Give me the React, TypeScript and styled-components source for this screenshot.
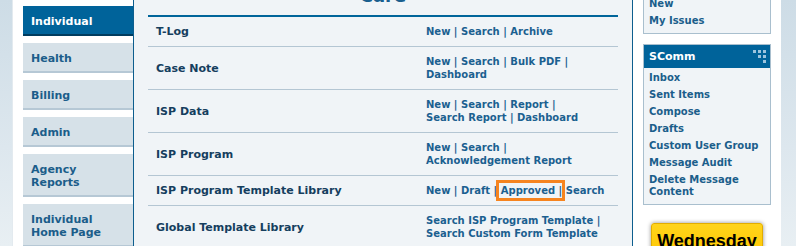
import React from "react";
import styled, { createGlobalStyle } from "styled-components";

const GlobalStyle = createGlobalStyle`
    html, body {
        margin: 0;
        height: 100%;
        overflow: hidden;
    }
    body {
        background: linear-gradient(180deg, #cddce6 0%, #dde7ee 60%, #e8eff3 100%);
        font-family: "DejaVu Sans", Verdana, sans-serif;
    }
`;

const Shell = styled.div`
    display: flex;
    align-items: flex-start;
    margin: 0 15px 0 12px;
    min-height: 100vh;
    padding: 0 10px;
    background: #ffffff;
    border-left: 1px solid #e3eaef;
`;

const Nav = styled.nav`
    width: 110px;
    flex-shrink: 0;
    padding-top: 6px;
    display: flex;
    flex-direction: column;
    gap: 7px;
`;

const NavTab = styled.a<{ $active?: boolean }>`
    display: block;
    padding: 9px 8px 6px;
    font-size: 11px;
    line-height: 13px;
    font-weight: bold;
    color: ${(p) => (p.$active ? "#ffffff" : "#1b5d8a")};
    background: ${(p) => (p.$active ? "#00639a" : "#d6e1e8")};
    border-bottom: 2px solid ${(p) => (p.$active ? "#003c5f" : "#b6c8d5")};
    text-decoration: none;
`;

const Main = styled.main`
    width: 500px;
    flex-shrink: 0;
    box-sizing: border-box;
    margin-top: -15px;
    padding: 0 14px;
    min-height: 300px;
    background: #f0f4f7;
    border-left: 1px solid #0d5e8e;
    border-right: 1px solid #0d5e8e;
`;

const Title = styled.h2`
    margin: 0 0 8px;
    font-size: 18px;
    line-height: 22px;
    font-weight: bold;
    text-align: center;
    color: #1a5f8f;
`;

const Table = styled.div`
    border-top: 2px solid #00659a;
`;

const Row = styled.div`
    display: grid;
    grid-template-columns: 278px 1fr;
    align-items: center;
    border-bottom: 1px solid #b4c6d3;
`;

const Label = styled.div`
    padding: 0 8px;
    font-size: 11px;
    line-height: 13px;
    font-weight: bold;
    color: #153e5e;
`;

const Links = styled.div`
    padding: 8px 0;
    font-size: 10px;
    line-height: 13px;
    font-weight: bold;
    color: #1b6090;
`;

const Link = styled.a`
    color: #1b6090;
    text-decoration: none;
    white-space: nowrap;
`;

const Highlight = styled.span`
    position: relative;

    &::after {
        content: "";
        position: absolute;
        left: -5px;
        right: -10px;
        top: -5px;
        bottom: -5px;
        border: 3px solid #f6841f;
    }
`;

const Sidebar = styled.aside`
    width: 128px;
    flex-shrink: 0;
    margin-left: 10px;
    margin-top: -7px;
    display: flex;
    flex-direction: column;
    gap: 10px;
`;

const Box = styled.section`
    background: #f0f4f7;
    border: 1px solid #a9bfce;
`;

const BoxHeader = styled.header`
    display: flex;
    justify-content: space-between;
    height: 23px;
    padding: 0 4px 0 5px;
    background: #00639a;
    color: #ffffff;
    font-size: 11px;
    line-height: 23px;
    font-weight: bold;

    svg {
        margin-top: 5px;
    }
`;

const BoxList = styled.ul`
    list-style: none;
    margin: 0;
    padding: 2px 5px 3px;
`;

const BoxItem = styled.li`
    padding: 2px 0 3px;
    font-size: 10px;
    line-height: 12px;
    font-weight: bold;

    a {
        color: #1b5e8b;
        text-decoration: none;
    }
`;

const DayBadge = styled.div`
    width: 112px;
    box-sizing: border-box;
    margin: 8px auto 0;
    padding: 6px 0;
    background: linear-gradient(180deg, #ffd41c 0%, #ffc600 100%);
    border: 1px solid #e2ad00;
    border-radius: 3px;
    box-shadow: 0 0 4px rgba(0, 0, 0, 0.45);
    font-family: "Liberation Sans", Arial, sans-serif;
    font-size: 18px;
    line-height: 22px;
    font-weight: bold;
    text-align: center;
    color: #000000;
`;

type CareRow = {
    label: string;
    links: string[];
    highlight?: string;
};

const careRows: CareRow[] = [
    { label: "T-Log", links: ["New", "Search", "Archive"] },
    { label: "Case Note", links: ["New", "Search", "Bulk PDF", "Dashboard"] },
    { label: "ISP Data", links: ["New", "Search", "Report", "Search Report", "Dashboard"] },
    { label: "ISP Program", links: ["New", "Search", "Acknowledgement Report"] },
    {
        label: "ISP Program Template Library",
        links: ["New", "Draft", "Approved", "Search"],
        highlight: "Approved"
    },
    { label: "Global Template Library", links: ["Search ISP Program Template", "Search Custom Form Template"] }
];

const navTabs = ["Individual", "Health", "Billing", "Admin", "Agency Reports", "Individual Home Page"];

const scommLinks = [
    "Inbox",
    "Sent Items",
    "Compose",
    "Drafts",
    "Custom User Group",
    "Message Audit",
    "Delete Message Content"
];

const GripIcon = () => (
    <svg width="14" height="13" viewBox="0 0 14 13">
        <g fill="#9cc4de">
            <rect x="1" y="0" width="3" height="3" />
            <rect x="6" y="0" width="3" height="3" />
            <rect x="11" y="0" width="3" height="3" />
            <rect x="6" y="5" width="3" height="3" />
            <rect x="11" y="5" width="3" height="3" />
            <rect x="11" y="10" width="3" height="3" />
        </g>
    </svg>
);

const renderLinks = (row: CareRow) =>
    row.links.map((name, i) => {
        const link = <Link href="#">{name}</Link>;
        return (
            <React.Fragment key={name}>
                {i > 0 && " | "}
                {row.highlight === name ? <Highlight>{link}</Highlight> : link}
            </React.Fragment>
        );
    });

export default function App() {
    return (
        <>
            <GlobalStyle />
            <Shell>
                <Nav>
                    {navTabs.map((tab, i) => (
                        <NavTab key={tab} href="#" $active={i === 0}>
                            {tab}
                        </NavTab>
                    ))}
                </Nav>
                <Main>
                    <Title>Care</Title>
                    <Table>
                        {careRows.map((row) => (
                            <Row key={row.label}>
                                <Label>{row.label}</Label>
                                <Links>{renderLinks(row)}</Links>
                            </Row>
                        ))}
                    </Table>
                </Main>
                <Sidebar>
                    <Box>
                        <BoxList>
                            <BoxItem><a href="#">New</a></BoxItem>
                            <BoxItem><a href="#">My Issues</a></BoxItem>
                        </BoxList>
                    </Box>
                    <Box>
                        <BoxHeader>
                            SComm
                            <GripIcon />
                        </BoxHeader>
                        <BoxList>
                            {scommLinks.map((name) => (
                                <BoxItem key={name}><a href="#">{name}</a></BoxItem>
                            ))}
                        </BoxList>
                    </Box>
                    <DayBadge>Wednesday</DayBadge>
                </Sidebar>
            </Shell>
        </>
    );
}
